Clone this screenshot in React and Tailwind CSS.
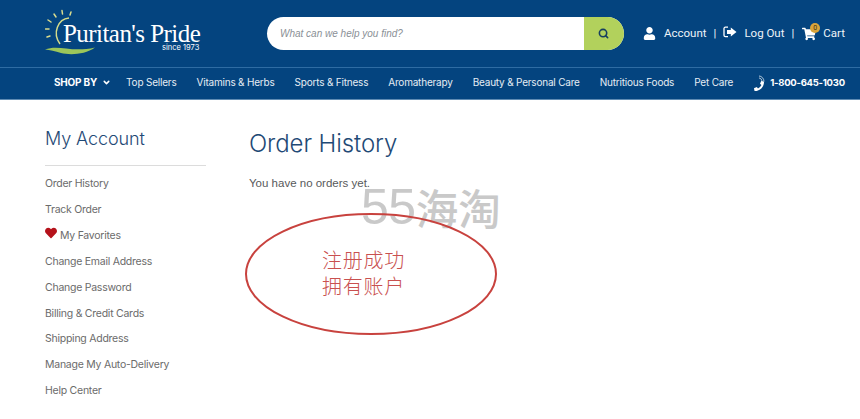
import { FaUser, FaHeart, FaShoppingCart, FaPhoneAlt } from "react-icons/fa";
import { FiSearch, FiChevronDown } from "react-icons/fi";

const navItems = [
  "Top Sellers",
  "Vitamins & Herbs",
  "Sports & Fitness",
  "Aromatherapy",
  "Beauty & Personal Care",
  "Nutritious Foods",
  "Pet Care",
];

const accountLinks = [
  "Order History",
  "Track Order",
  "My Favorites",
  "Change Email Address",
  "Change Password",
  "Billing & Credit Cards",
  "Shipping Address",
  "Manage My Auto-Delivery",
  "Help Center",
];

function Logo() {
  return (
    <div className="relative w-[158px] h-[50px] shrink-0">
      <svg className="absolute left-0 top-0" width="60" height="50" viewBox="0 0 60 50" fill="none">
        <path d="M24 9 C 13 10, 7 24, 15 35" stroke="#d5dc8a" strokeWidth="1.5" />
        <g stroke="#d9dc8e" strokeWidth="1.5" strokeLinecap="round">
          <path d="M11 8 L9 5" />
          <path d="M17.5 5 L17 1.5" />
          <path d="M25 6 L26 3" />
          <path d="M6 13 L3 11" />
          <path d="M4 20 L0.5 20" />
          <path d="M5 27 L2 28" />
        </g>
        <path d="M0 40.5 C 14 35, 26 44, 50 38.5 C 40 46, 24 46, 16 44 C 10 42, 5 41, 0 40.5 Z" fill="#9cc65a" />
      </svg>
      <span className="absolute left-[18px] top-[15px] font-['Liberation_Serif',serif] text-[25px] leading-[20px] tracking-[-0.55px] text-white whitespace-nowrap">
        Puritan's Pride
      </span>
      <span className="absolute left-[117px] top-[35px] font-['Inter',sans-serif] text-[7.5px] leading-[8px] text-white whitespace-nowrap">
        since 1973
      </span>
    </div>
  );
}

function LogOutIcon() {
  return (
    <svg width="14" height="13" viewBox="0 0 14 13" fill="none">
      <path d="M5 1.2 H2.4 C1.5 1.2 1 1.8 1 2.6 V9.2 C1 10 1.5 10.6 2.4 10.6 H5" stroke="white" strokeWidth="1.3" />
      <path d="M7.8 1.5 L13.5 6 L7.8 10.5 V8 H4 V4 H7.8 Z" fill="white" />
    </svg>
  );
}

function PhoneIcon() {
  return (
    <div className="relative w-[12px] h-[16px]">
      <FaPhoneAlt size={10} className="absolute left-0 bottom-0 text-white -scale-x-100" />
      <svg className="absolute left-[3px] top-0" width="9" height="9" viewBox="0 0 9 9" fill="none" stroke="#dfe8f0" strokeWidth="0.8">
        <path d="M2 1 C 4.5 1, 7 3.5, 7 6.5" />
        <path d="M2 3 C 3.5 3, 5 4.5, 5 6.5" />
      </svg>
    </div>
  );
}

function Header() {
  return (
    <header className="bg-[#04447f] text-white border-b border-[#5f8bb3]">
      <div className="h-[68px] flex items-center pl-[45px] border-b border-[#2f6ca3]">
        <Logo />
        <div className="ml-[64px] w-[357px] h-[33px] flex rounded-full overflow-hidden bg-white">
          <div className="flex-1 pl-[13px] flex items-center font-['Liberation_Sans',sans-serif] italic text-[10px] text-[#8a8f96]">
            What can we help you find?
          </div>
          <div className="w-[40px] pr-[1px] bg-[#b2d15c] flex items-center justify-center text-[#173f5f]">
            <FiSearch size={11} strokeWidth={3.5} />
          </div>
        </div>
        <div className="ml-[19px] flex items-center font-['Roboto',sans-serif] text-[11.5px] text-[#eef3f8] whitespace-nowrap">
          <FaUser size={13} className="text-white" />
          <span className="ml-[8px]">Account</span>
          <span className="ml-[7px]">|</span>
          <span className="ml-[7px] -mt-[3px]"><LogOutIcon /></span>
          <span className="ml-[7px]">Log Out</span>
          <span className="ml-[7px]">|</span>
          <span className="relative ml-[8px]">
            <FaShoppingCart size={14} className="text-white" />
            <span className="absolute -top-[4px] left-[8px] w-[10px] h-[10px] rounded-full bg-[#d9a43b] text-[#3b3212] text-[7px] leading-[10px] text-center">
              0
            </span>
          </span>
          <span className="ml-[7px]">Cart</span>
        </div>
      </div>
      <nav className="h-[31px] pb-[2px] flex items-center pl-[54px] font-['Inter',sans-serif] text-[10px] tracking-[-0.2px] text-[#e6edf4] whitespace-nowrap">
        <span className="font-bold text-white flex items-center">
          SHOP BY
          <FiChevronDown size={9} strokeWidth={4} className="ml-[5px]" />
        </span>
        <div className="ml-[15px] flex gap-[20px]">
          {navItems.map((item) => (
            <span key={item}>{item}</span>
          ))}
        </div>
        <div className="ml-[21px]"><PhoneIcon /></div>
        <span className="ml-[4px] mt-[2px] text-[9.5px] tracking-[-0.25px] font-bold text-white">1-800-645-1030</span>
      </nav>
    </header>
  );
}

function Sidebar() {
  return (
    <aside className="w-[161px] shrink-0">
      <h2 className="text-[18px] leading-[24px] text-[#1f4a76] font-['Inter',sans-serif] font-light tracking-[-0.1px] border-b border-[#dcdcdc] pb-[14px] pt-[27px]">
        My Account
      </h2>
      <ul className="mt-[5px] font-['Inter',sans-serif] text-[10.5px] tracking-[-0.25px] text-[#6b6b6b]">
        {accountLinks.map((link) => (
          <li key={link} className="h-[25.9px] flex items-center whitespace-nowrap">
            {link === "My Favorites" && <FaHeart size={12} className="text-[#b5121b] mr-[3px] -mt-[5px]" />}
            {link}
          </li>
        ))}
      </ul>
    </aside>
  );
}

export default function App() {
  return (
    <div className="relative w-[860px] h-[419px] overflow-hidden bg-white">
      <Header />
      <main className="flex pl-[45px]">
        <Sidebar />
        <section className="ml-[43px]">
          <h1 className="mt-[29px] text-[24px] leading-[30px] tracking-[-0.1px] text-[#1f4a76] font-['Inter',sans-serif] font-light">
            Order History
          </h1>
          <p className="mt-[16px] text-[11.5px] leading-[16px] text-[#58595b] font-['Liberation_Sans',sans-serif]">
            You have no orders yet.
          </p>
        </section>
      </main>

      {/* watermark */}
      <div className="absolute left-[361px] top-[181px] h-[52px] flex items-center text-[#c4c4c4] opacity-90 whitespace-nowrap">
        <span className="text-[50px] leading-[52px] tracking-[-0.5px] font-['Liberation_Sans',sans-serif]">55</span>
        <span className="text-[42.5px] leading-[52px] font-['Noto_Sans_CJK_SC',sans-serif] font-medium">海淘</span>
      </div>

      {/* annotation drawn over the page */}
      <svg className="absolute left-[244px] top-[211px]" width="255" height="126" viewBox="0 0 255 126" fill="none">
        <ellipse cx="127" cy="63" rx="125" ry="60" stroke="#c8423e" strokeWidth="2" />
      </svg>
      <div className="absolute left-[322px] top-[247px] text-[20px] leading-[26px] tracking-[0.75px] text-[#c9504f] font-['Noto_Sans_CJK_SC',sans-serif] font-light">
        <div>注册成功</div>
        <div>拥有账户</div>
      </div>
    </div>
  );
}
